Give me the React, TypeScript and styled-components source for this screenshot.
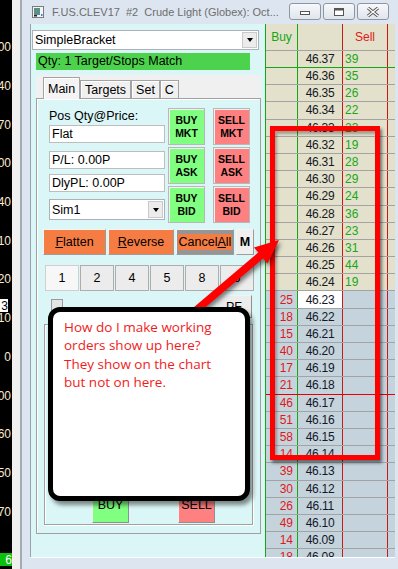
import React from 'react'
import styled, { createGlobalStyle } from 'styled-components'

const GlobalStyle = createGlobalStyle`
  html, body {
    margin: 0;
    padding: 0;
    background: #f0f0f0;
  }
  body {
    font-family: "Liberation Sans", Arial, sans-serif;
    font-size: 12px;
    color: #000;
  }
`

const Screen = styled.div`
  position: relative;
  display: flex;
  width: 398px;
  height: 569px;
  overflow: hidden;
  background: #f0f0f0;
`

// price axis of the chart behind, only its right edge shows
const Axis = styled.div`
  position: relative;
  flex: none;
  width: 12px;
  padding-top: 28px;
  box-sizing: border-box;
  background: #000;
  overflow: hidden;
`

const AxisLabel = styled.div`
  height: 38.7px;
  display: flex;
  align-items: center;
  justify-content: flex-end;
  padding-right: 1px;
  color: #fbe8cc;
  font-size: 12px;
  white-space: nowrap;
`

const PriceTag = styled.div<{ $top: number; $w: number; $bg: string; $fg: string }>`
  position: absolute;
  left: 0;
  top: ${p => p.$top}px;
  width: ${p => p.$w}px;
  height: 13px;
  display: flex;
  align-items: center;
  justify-content: flex-end;
  background: ${p => p.$bg};
  color: ${p => p.$fg};
  font-size: 12px;
`

const Window = styled.div`
  display: flex;
  flex-direction: column;
  flex: none;
  width: 378px;
  margin-left: 8px;
  padding: 0 3px 0 8px;
  box-sizing: border-box;
  border-left: 2px solid #a3abb5;
  background: #dde6f0;
`

const TitleBar = styled.div`
  display: flex;
  align-items: center;
  height: 24px;
  flex: none;
`

const TitleText = styled.div`
  flex: 1;
  margin-left: 8px;
  overflow: hidden;
  white-space: pre;
  color: #6d6d6d;
  font-size: 11px;
`

const Controls = styled.div`
  display: flex;
  gap: 2px;
  align-self: flex-start;
  margin: 3px 6px 0 0;
`

const CtlButton = styled.div`
  width: 32px;
  height: 17px;
  box-sizing: border-box;
  display: flex;
  align-items: center;
  justify-content: center;
  border: 1px solid #8d97a4;
  border-radius: 3px;
  background: linear-gradient(#f7f9fb, #dfe5ec);
`

const Body = styled.div`
  display: flex;
  height: 533px;
  flex: none;
  border-left: 1px solid #97a2ae;
`

const BottomFrame = styled.div`
  flex: 1;
  border-top: 1px solid #fbfdff;
`

const LeftPanel = styled.div`
  display: flex;
  flex-direction: column;
  flex: none;
  width: 234px;
  padding-top: 6px;
  box-sizing: border-box;
  background: #dbf6f6;
`

const Combo = styled.div<{ $w: number; $h: number; $ml?: number }>`
  display: flex;
  align-items: center;
  width: ${p => p.$w}px;
  height: ${p => p.$h}px;
  margin-left: ${p => p.$ml ?? 0}px;
  padding-left: 2px;
  box-sizing: border-box;
  background: #fff;
  border: 1px solid #aab1ba;
  font-size: 12.5px;
`

const ComboText = styled.span`
  flex: 1;
`

const ComboArrow = styled.span`
  display: flex;
  align-items: center;
  justify-content: center;
  width: 15px;
  align-self: stretch;
  margin: 1px 1px 1px 0;
  background: #ececec;
  border: 1px solid #cacaca;
  box-sizing: border-box;
  &::after {
    content: '';
    border-left: 3.5px solid transparent;
    border-right: 3.5px solid transparent;
    border-top: 4px solid #000;
  }
`

const StatusBar = styled.div`
  width: 214px;
  height: 17px;
  margin: 3px 0 0 5px;
  padding-left: 2px;
  box-sizing: border-box;
  background: #4dd24d;
  line-height: 17px;
  font-size: 12.5px;
`

const TabControl = styled.div`
  display: flex;
  flex-direction: column;
  width: 225px;
  height: 459px;
  margin: 5px 0 0 5px;
`

const TabStrip = styled.div`
  display: flex;
  align-items: flex-end;
  height: 23px;
  flex: none;
  padding-left: 7px;
  background: #f0f0f0;
`

const Tab = styled.div<{ $active?: boolean }>`
  position: relative;
  z-index: ${p => (p.$active ? 1 : 0)};
  display: flex;
  align-items: center;
  height: ${p => (p.$active ? 22 : 18)}px;
  margin-bottom: ${p => (p.$active ? -1 : 0)}px;
  padding: 0 4px;
  box-sizing: border-box;
  border: 1px solid #a3a3a3;
  border-bottom: none;
  box-shadow: inset 1px 1px 0 #fff;
  background: ${p => (p.$active ? '#f4f4f4' : '#f0f0f0')};
  font-size: 12.5px;
`

const TabPage = styled.div`
  display: flex;
  flex-direction: column;
  flex: 1;
  border: 1px solid #a0a0a0;
  box-shadow: inset 1px 1px 0 #fff;
  background: #dbf6f6;
`

const TopArea = styled.div`
  display: flex;
  margin-top: 9px;
  padding-left: 12px;
`

const FieldColumn = styled.div`
  display: flex;
  flex-direction: column;
  width: 116px;
`

const FieldLabel = styled.div`
  height: 16px;
  line-height: 16px;
  font-size: 12.5px;
`

const Field = styled.div<{ $mt: number }>`
  display: flex;
  align-items: center;
  height: 18px;
  margin-top: ${p => p.$mt}px;
  padding-left: 2px;
  box-sizing: border-box;
  background: #fff;
  border: 1px solid #bdbdbd;
  font-size: 12.5px;
`

const OrderGrid = styled.div`
  display: grid;
  grid-template-columns: 37px 37px;
  grid-auto-rows: 37px;
  column-gap: 8px;
  row-gap: 2px;
  margin-left: 3px;
`

const OrderButton = styled.div<{ $side: 'buy' | 'sell' }>`
  display: flex;
  align-items: center;
  justify-content: center;
  text-align: center;
  box-sizing: border-box;
  border: 1px solid #b8b8b8;
  box-shadow: inset 1px 1px 0 #f2f2f2;
  background: ${p => (p.$side === 'buy' ? '#80ff80' : '#ff8080')};
  font-size: 10.5px;
  font-weight: bold;
  line-height: 13px;
`

const ActionRow = styled.div`
  display: flex;
  gap: 2px;
  height: 26px;
  margin: 6px 0 0 6px;
`

const ActionButton = styled.div<{ $w: number; $bg: string; $bold?: boolean }>`
  display: flex;
  align-items: center;
  justify-content: center;
  width: ${p => p.$w}px;
  box-sizing: border-box;
  border: 1px solid #9c9c9c;
  border-top-color: #f4f4f4;
  border-left-color: #f4f4f4;
  background: ${p => p.$bg};
  font-size: 12.5px;
  font-weight: ${p => (p.$bold ? 'bold' : 'normal')};
`

const Focus = styled.span`
  padding: 1px 1px;
  background: #f57c42;
`

const Key = styled.span`
  text-decoration: underline;
`

const NumberRow = styled.div`
  display: flex;
  gap: 1px;
  height: 26px;
  margin: 10px 0 0 8px;
`

const NumButton = styled.div<{ $active?: boolean }>`
  display: flex;
  align-items: center;
  justify-content: center;
  width: 34px;
  box-sizing: border-box;
  border: 1px solid ${p => (p.$active ? '#cfcfcf' : '#adadad')};
  background: ${p => (p.$active ? '#f7f7f7' : '#ececec')};
  font-size: 12.5px;
`

const MiscRow = styled.div`
  display: flex;
  align-items: flex-start;
  height: 23px;
  margin-top: 4px;
  padding: 0 8px 0 14px;
`

const SmallBox = styled.div`
  width: 12px;
  height: 12px;
  margin-top: 4px;
  box-sizing: border-box;
  border: 1px solid #9a9a9a;
  background: #e4e4e4;
`

const SideButton = styled.div<{ $bg: string; $w: number; $h: number }>`
  display: flex;
  align-items: center;
  justify-content: center;
  width: ${p => p.$w}px;
  height: ${p => p.$h}px;
  box-sizing: border-box;
  border: 1px solid #8f8f8f;
  border-top-color: #f2f2f2;
  border-left-color: #f2f2f2;
  background: ${p => p.$bg};
  font-size: 12.5px;
`

const PushRight = styled.div`
  margin-left: auto;
`

const GroupBox = styled.div`
  display: flex;
  align-items: flex-end;
  gap: 49px;
  width: 209px;
  height: 201px;
  margin: 6px 0 0 7px;
  padding: 0 0 1px 47px;
  box-sizing: border-box;
  border: 1px solid #a0a0a0;
  box-shadow: inset 1px 1px 0 #fff, 1px 1px 0 #fff;
`

// price ladder
const Ladder = styled.div`
  flex: none;
  width: 130px;
  box-sizing: border-box;
  border-left: 1px solid #15a515;
  background: #e3e0cb;
  overflow: hidden;
  font-size: 12px;
`

const LadderRow = styled.div<{ $h: number; $line: string; $bg: string }>`
  display: grid;
  grid-template-columns: 32px 45px 45px 7px;
  height: ${p => p.$h}px;
  box-sizing: border-box;
  border-bottom: 1px solid ${p => p.$line};
  background: ${p => p.$bg};
`

const Cell = styled.div<{ $edge: string }>`
  display: flex;
  align-items: center;
  border-right: 1px solid ${p => p.$edge};
  white-space: nowrap;
  overflow: hidden;
`

const BuyCell = styled(Cell)`
  justify-content: flex-end;
  padding-right: 4px;
  color: #e01818;
`

const PriceCell = styled(Cell)<{ $current?: boolean }>`
  justify-content: center;
  background: ${p => (p.$current ? '#fff' : 'transparent')};
  color: #141826;
  letter-spacing: -0.3px;
`

const SellCell = styled(Cell)`
  padding-left: 2px;
  color: #18a818;
`

const HeadCell = styled(Cell)<{ $color: string }>`
  justify-content: center;
  color: ${p => p.$color};
`

// annotations drawn over the screenshot
const Highlight = styled.div`
  position: absolute;
  left: 270px;
  top: 126px;
  width: 110px;
  height: 334px;
  box-sizing: border-box;
  border: 5px solid #ff0000;
  box-shadow: 2px 3px 3px rgba(0, 0, 0, 0.5), inset 2px 3px 3px rgba(0, 0, 0, 0.3);
  pointer-events: none;
`

const ArrowLayer = styled.svg`
  position: absolute;
  left: 0;
  top: 0;
  width: 398px;
  height: 569px;
  pointer-events: none;
  filter: drop-shadow(2px 3px 2px rgba(0, 0, 0, 0.5));
`

const Callout = styled.div`
  position: absolute;
  left: 48px;
  top: 307px;
  width: 202px;
  height: 194px;
  box-sizing: border-box;
  padding: 6px 0 0 11px;
  border: 5px solid #000;
  border-radius: 12px;
  background: #fff;
  box-shadow: 3px 4px 4px rgba(0, 0, 0, 0.45);
  color: #f01c1c;
  font-family: "Open Sans", "Liberation Sans", sans-serif;
  font-size: 13.5px;
  line-height: 18.3px;
`

const axisLabels = ['00', '40', '70', '00', '40', '10', '20', '10', '0', '00', '60', '50', '70']

const asks: [string, number][] = [
  ['46.37', 39], ['46.36', 35], ['46.35', 26], ['46.34', 22], ['46.33', 23],
  ['46.32', 19], ['46.31', 28], ['46.30', 29], ['46.29', 24], ['46.28', 36],
  ['46.27', 23], ['46.26', 31], ['46.25', 44], ['46.24', 19],
]

const bids: [string, number][] = [
  ['46.23', 25], ['46.22', 18], ['46.21', 15], ['46.20', 40], ['46.19', 17],
  ['46.18', 21], ['46.17', 46], ['46.16', 51], ['46.15', 58], ['46.14', 14],
  ['46.13', 39], ['46.12', 30], ['46.11', 26], ['46.10', 49], ['46.09', 14],
  ['46.08', 18],
]

const GREEN = '#15a515'
const RED = '#c81818'

const rows = [
  ...asks.map(([price, size]) => ({ price, buy: '', sell: String(size), bid: false })),
  ...bids.map(([price, size]) => ({ price, buy: String(size), sell: '', bid: true })),
]

const AppIcon = () => (
  <svg width="12" height="12" viewBox="0 0 12 12" style={{ marginLeft: 2, flex: 'none' }}>
    <rect x="0.5" y="0.5" width="11" height="11" fill="#f4f4f4" stroke="#7b7b7b" />
    <rect x="2" y="2" width="6" height="7" fill="#5a8f8a" />
    <rect x="2" y="9" width="3" height="1.5" fill="#222" />
    <rect x="9" y="8" width="1.5" height="2" fill="#3a7bd5" />
  </svg>
)

export default function App() {
  return (
    <Screen>
      <GlobalStyle />
      <Axis>
        {axisLabels.map((l, i) => (
          <AxisLabel key={i}>{l}</AxisLabel>
        ))}
        <PriceTag $top={299} $w={8} $bg="#fff" $fg="#000">3</PriceTag>
        <PriceTag $top={553} $w={12} $bg="#0cc00c" $fg="#fff">6</PriceTag>
      </Axis>

      <Window>
        <TitleBar>
          <AppIcon />
          <TitleText>F.US.CLEV17  #2  Crude Light (Globex): Oct...</TitleText>
          <Controls>
            <CtlButton>
              <svg width="12" height="6" viewBox="0 0 12 6">
                <rect x="1.5" y="2.5" width="9" height="3" fill="#fff" stroke="#555" />
              </svg>
            </CtlButton>
            <CtlButton>
              <svg width="12" height="10" viewBox="0 0 12 10">
                <rect x="1.5" y="1.5" width="9" height="7" fill="#fff" stroke="#555" />
                <rect x="1.5" y="1.5" width="9" height="2" fill="#555" />
              </svg>
            </CtlButton>
            <CtlButton>
              <svg width="14" height="10" viewBox="0 0 14 10">
                <path d="M2 1 L12 9 M12 1 L2 9" stroke="#555" strokeWidth="3.2" />
                <path d="M2 1 L12 9 M12 1 L2 9" stroke="#fff" strokeWidth="1.3" />
              </svg>
            </CtlButton>
          </Controls>
        </TitleBar>

        <Body>
          <LeftPanel>
            <Combo $w={227} $h={20} $ml={1}>
              <ComboText>SimpleBracket</ComboText>
              <ComboArrow />
            </Combo>
            <StatusBar>Qty: 1 Target/Stops Match</StatusBar>

            <TabControl>
              <TabStrip>
                <Tab $active>Main</Tab>
                <Tab>Targets</Tab>
                <Tab>Set</Tab>
                <Tab>C</Tab>
              </TabStrip>
              <TabPage>
                <TopArea>
                  <FieldColumn>
                    <FieldLabel>Pos Qty@Price:</FieldLabel>
                    <Field $mt={1}>Flat</Field>
                    <Field $mt={8}>P/L: 0.00P</Field>
                    <Field $mt={5}>DlyPL: 0.00P</Field>
                    <Combo $w={116} $h={21} style={{ marginTop: 7 }}>
                      <ComboText>Sim1</ComboText>
                      <ComboArrow />
                    </Combo>
                  </FieldColumn>
                  <OrderGrid>
                    <OrderButton $side="buy">BUY<br />MKT</OrderButton>
                    <OrderButton $side="sell">SELL<br />MKT</OrderButton>
                    <OrderButton $side="buy">BUY<br />ASK</OrderButton>
                    <OrderButton $side="sell">SELL<br />ASK</OrderButton>
                    <OrderButton $side="buy">BUY<br />BID</OrderButton>
                    <OrderButton $side="sell">SELL<br />BID</OrderButton>
                  </OrderGrid>
                </TopArea>

                <ActionRow>
                  <ActionButton $w={63} $bg="#f57c42"><Key>F</Key>latten</ActionButton>
                  <ActionButton $w={66} $bg="#f57c42"><Key>R</Key>everse</ActionButton>
                  <ActionButton $w={58} $bg="#959595">
                    <Focus>Cancel<Key>A</Key>ll</Focus>
                  </ActionButton>
                  <ActionButton $w={18} $bg="#f0f0f0" $bold>M</ActionButton>
                </ActionRow>

                <NumberRow>
                  {['1', '2', '4', '5', '8', '6'].map((n, i) => (
                    <NumButton key={n} $active={i === 0}>{n}</NumButton>
                  ))}
                </NumberRow>

                <MiscRow>
                  <SmallBox />
                  <PushRight>
                    <SideButton $bg="#ececec" $w={36} $h={23}>PF</SideButton>
                  </PushRight>
                </MiscRow>

                <GroupBox>
                  <SideButton $bg="#80ff80" $w={37} $h={37}>BUY</SideButton>
                  <SideButton $bg="#ff8080" $w={37} $h={37}>SELL</SideButton>
                </GroupBox>
              </TabPage>
            </TabControl>
          </LeftPanel>

          <Ladder>
            <LadderRow $h={27} $line="#a3a3a3" $bg="#e3e0cb">
              <HeadCell $edge={GREEN} $color="#12a812">Buy</HeadCell>
              <HeadCell $edge={RED} $color="#000" />
              <HeadCell $edge={RED} $color="#e01818">Sell</HeadCell>
              <Cell $edge="transparent" />
            </LadderRow>
            {rows.map((r, i) => (
              <LadderRow
                key={r.price}
                $h={i === 0 ? 17 : 17.2}
                $line={i === 0 ? GREEN : r.price === '46.18' ? '#e80000' : '#a3a3a3'}
                $bg={r.bid ? '#c5d3dd' : '#e3e0cb'}
              >
                <BuyCell $edge={GREEN}>{r.buy}</BuyCell>
                <PriceCell $edge={RED} $current={r.price === '46.23'}>{r.price}</PriceCell>
                <SellCell $edge={RED}>{r.sell}</SellCell>
                <Cell $edge="transparent" />
              </LadderRow>
            ))}
          </Ladder>
        </Body>
        <BottomFrame />
      </Window>

      <Highlight />
      <ArrowLayer viewBox="0 0 398 569">
        <polygon
          points="179.2,329.6 263.1,258.4 267.5,263.5 279,240 253.9,247.5 258.3,252.6 174.4,323.8"
          fill="#ff0000"
        />
      </ArrowLayer>
      <Callout>
        How do I make working<br />
        orders show up here?<br />
        They show on the chart<br />
        but not on here.
      </Callout>
    </Screen>
  )
}
